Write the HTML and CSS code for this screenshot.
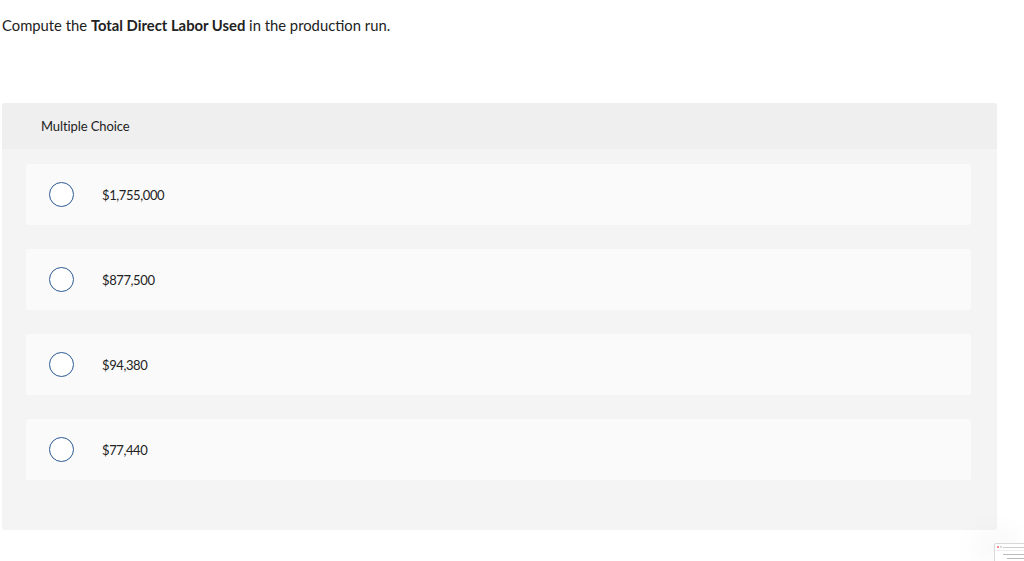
FILE: index.html
```html
<!DOCTYPE html>
<html>
<head>
<meta charset="utf-8">
<link rel="stylesheet" href="styles.css">
</head>
<body>
<p class="question">Compute the <strong>Total Direct Labor Used</strong> in the production run.</p>
<section class="panel">
  <div class="panel-head">Multiple Choice</div>
  <div class="options">
    <label class="option"><span class="radio"></span><span class="val">$1,755,000</span></label>
    <label class="option"><span class="radio"></span><span class="val">$877,500</span></label>
    <label class="option"><span class="radio"></span><span class="val">$94,380</span></label>
    <label class="option"><span class="radio"></span><span class="val">$77,440</span></label>
  </div>
</section>
<div class="thumb">
  <div class="thumb-bar"><i class="dot r"></i><i class="dot y"></i><i class="line"></i></div>
  <div class="thumb-row"></div>
  <div class="thumb-row short"></div>
</div>
</body>
</html>
```
FILE: styles.css
```css
html, body {
  margin: 0;
  padding: 0;
  background: #ffffff;
}
body {
  font-family: "Lato", "Open Sans", sans-serif;
  color: #222;
  width: 1024px;
  height: 561px;
  overflow: hidden;
  position: relative;
}
.question {
  margin: 0;
  padding: 16px 0 0 2px;
  font-size: 14.8px;
  line-height: 18px;
  height: 103px;
  box-sizing: border-box;
}
.question strong {
  font-weight: 700;
}
.panel {
  margin-left: 2px;
  width: 995px;
  height: 427px;
  background: #f4f4f4;
  border-radius: 3px;
  overflow: hidden;
}
.panel-head {
  height: 46px;
  background: #efefef;
  font-size: 13px;
  line-height: 46px;
  padding-left: 39px;
  color: #222;
  letter-spacing: -0.1px;
}
.options {
  display: flex;
  flex-direction: column;
  gap: 24px;
  padding: 15px 26px 0 24px;
}
.option {
  display: flex;
  align-items: center;
  height: 61px;
  background: #fafafa;
  border-radius: 3px;
  padding-left: 23px;
  font-size: 13px;
}
.radio {
  width: 23px;
  height: 23px;
  border: 1.5px solid #2c5a94;
  border-radius: 50%;
  background: #fff;
  flex: none;
}
.val {
  margin-left: 28px;
  color: #222;
  letter-spacing: -0.4px;
}
.thumb {
  position: absolute;
  left: 994px;
  top: 543px;
  width: 40px;
  height: 24px;
  background: #fff;
  border: 1px solid #d8d8d8;
  border-radius: 2px;
  box-shadow: -20px -10px 30px rgba(0,0,0,0.04);
}
.thumb-bar {
  display: flex;
  align-items: center;
  gap: 1px;
  height: 4px;
  padding: 1px 2px;
  border-bottom: 1px solid #eee;
}
.dot {
  width: 2px;
  height: 2px;
  border-radius: 50%;
}
.dot.r { background: #e66; }
.dot.y { background: #ccc; }
.line {
  flex: 1;
  height: 1px;
  background: #ccc;
}
.thumb-row {
  height: 1px;
  margin: 3px 3px 0 8px;
  background: #bbb;
}
.thumb-row.short {
  margin-left: 12px;
  margin-right: 10px;
}
```
